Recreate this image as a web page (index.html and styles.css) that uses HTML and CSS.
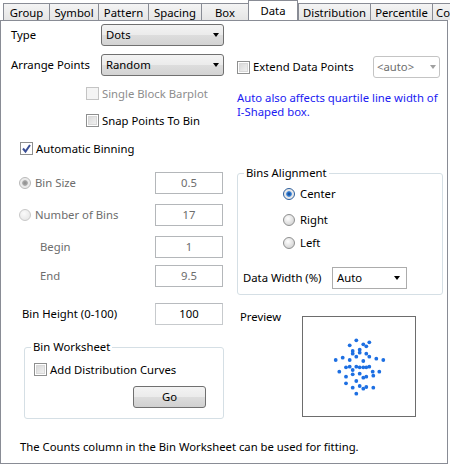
FILE: index.html
```html
<!DOCTYPE html>
<html>
<head>
<meta charset="utf-8">
<link rel="stylesheet" href="styles.css">
</head>
<body>
<div class="tabs">
  <div class="tab">Group</div>
  <div class="tab">Symbol</div>
  <div class="tab">Pattern</div>
  <div class="tab">Spacing</div>
  <div class="tab">Box</div>
  <div class="tab active">Data</div>
  <div class="tab">Distribution</div>
  <div class="tab">Percentile</div>
  <div class="tab last">Colormap</div>
</div>
<div class="panel">
  <div class="top">
    <div class="col-left">
      <div class="field row-type"><span class="lbl">Type</span><div class="combo"><span class="combo-text">Dots</span><i class="arrow"></i></div></div>
      <div class="field row-arrange"><span class="lbl">Arrange Points</span><div class="combo"><span class="combo-text">Random</span><i class="arrow"></i></div></div>
      <div class="check disabled cb-single"><span class="box"></span><span>Single Block Barplot</span></div>
      <div class="check cb-snap"><span class="box"></span><span>Snap Points To Bin</span></div>
    </div>
    <div class="col-right">
      <div class="extend-row">
        <div class="check"><span class="box"></span><span>Extend Data Points</span></div>
        <div class="combo combo-disabled"><span class="combo-text">&lt;auto&gt;</span><i class="arrow"></i></div>
      </div>
      <p class="note">Auto also affects quartile line width of<br>I-Shaped box.</p>
    </div>
  </div>
  <div class="check auto-bin"><span class="box checked"><svg width="11" height="11" viewBox="0 0 11 11"><path d="M2 5.5 L4.5 8.5 L9 2" fill="none" stroke="#3b4f96" stroke-width="2"/></svg></span><span>Automatic Binning</span></div>
  <div class="middle">
    <div class="col-left">
      <div class="brow r-size"><div class="lead"><span class="radio dis-on"></span><span class="dim">Bin Size</span></div><div class="tbox dis">0.5</div></div>
      <div class="brow r-num"><div class="lead"><span class="radio dis-off"></span><span class="dim">Number of Bins</span></div><div class="tbox dis">17</div></div>
      <div class="brow r-begin"><div class="lead indent"><span class="dim">Begin</span></div><div class="tbox dis">1</div></div>
      <div class="brow r-end"><div class="lead indent"><span class="dim">End</span></div><div class="tbox dis">9.5</div></div>
      <div class="brow r-height"><div class="lead indent2"><span>Bin Height (0-100)</span></div><div class="tbox">100</div></div>
      <div class="group ws">
        <span class="legend">Bin Worksheet</span>
        <div class="check cb-dist"><span class="box"></span><span>Add Distribution Curves</span></div>
        <div class="btn">Go</div>
      </div>
    </div>
    <div class="col-right">
      <div class="group align">
        <span class="legend">Bins Alignment</span>
        <div class="ropt r1"><span class="radio on"></span><span>Center</span></div>
        <div class="ropt r2"><span class="radio"></span><span>Right</span></div>
        <div class="ropt r3"><span class="radio"></span><span>Left</span></div>
        <div class="dw-row"><span class="dw-lbl">Data Width (%)</span><div class="combo combo-white"><span class="combo-text">Auto</span><i class="arrow"></i></div></div>
      </div>
      <div class="preview-row">
        <span class="preview-lbl">Preview</span>
        <div class="preview">
          <svg width="112" height="99" viewBox="0 0 112 99">
            <g fill="#1d6fe2">
              <circle cx="53.3" cy="23.3" r="1.9"/><circle cx="46.7" cy="28.3" r="1.9"/><circle cx="60.3" cy="27.3" r="1.9"/>
              <circle cx="66.3" cy="25.3" r="1.9"/><circle cx="63.3" cy="29.3" r="1.9"/><circle cx="49.7" cy="34" r="1.9"/>
              <circle cx="56.7" cy="32.7" r="1.9"/><circle cx="49.7" cy="36.7" r="1.9"/><circle cx="56.7" cy="35.7" r="1.9"/>
              <circle cx="63.3" cy="36.7" r="1.9"/><circle cx="53.3" cy="39.7" r="1.9"/><circle cx="66.3" cy="39.7" r="1.9"/>
              <circle cx="39.7" cy="40.7" r="1.9"/><circle cx="32.7" cy="43" r="1.9"/><circle cx="46.7" cy="43" r="1.9"/>
              <circle cx="60.3" cy="44" r="1.9"/><circle cx="73.3" cy="41.7" r="1.9"/><circle cx="80.3" cy="43" r="1.9"/>
              <circle cx="43" cy="50.3" r="1.9"/><circle cx="46.7" cy="49.7" r="1.9"/><circle cx="53.3" cy="49.7" r="1.9"/>
              <circle cx="56.7" cy="50.3" r="1.9"/><circle cx="60.3" cy="50.3" r="1.9"/><circle cx="63.3" cy="50.3" r="1.9"/>
              <circle cx="66.3" cy="49.7" r="1.9"/><circle cx="36.3" cy="54.7" r="1.9"/><circle cx="49.7" cy="53" r="1.9"/>
              <circle cx="43" cy="59.7" r="1.9"/><circle cx="49.7" cy="57.3" r="1.9"/><circle cx="56.7" cy="56.7" r="1.9"/>
              <circle cx="63.3" cy="59.7" r="1.9"/><circle cx="60.3" cy="60.7" r="1.9"/><circle cx="69.7" cy="54.7" r="1.9"/>
              <circle cx="76.3" cy="54.7" r="1.9"/><circle cx="70.3" cy="58.7" r="1.9"/><circle cx="53.3" cy="64" r="1.9"/>
              <circle cx="43" cy="66.3" r="1.9"/><circle cx="56.7" cy="69" r="1.9"/><circle cx="49.7" cy="70.7" r="1.9"/>
              <circle cx="63.3" cy="70" r="1.9"/><circle cx="60.3" cy="71.7" r="1.9"/><circle cx="70.3" cy="70.7" r="1.9"/>
              <circle cx="53.3" cy="76.7" r="1.9"/>
            </g>
          </svg>
        </div>
      </div>
    </div>
  </div>
  <p class="footer">The Counts column in the Bin Worksheet can be used for fitting.</p>
</div>
</body>
</html>
```
FILE: styles.css
```css
* { box-sizing: border-box; }
body {
  margin: 0;
  width: 450px;
  height: 464px;
  overflow: hidden;
  background: #fff;
  color: #000;
  font: 11.3px/16px "Noto Sans", "Open Sans", sans-serif;
}
.tabs {
  display: grid;
  grid-template-columns: 46px 49px 50px 53px 47px 50px 72px 62px 60px;
  margin-left: 3px;
  width: 447px;
  height: 20px;
  align-items: end;
  overflow: hidden;
}
.tab {
  height: 18px;
  border: 1px solid #898c95;
  border-bottom: none;
  border-right: none;
  background: linear-gradient(#f4f4f4, #e4e4e4);
  text-align: center;
  line-height: 17px;
  white-space: nowrap;
  overflow: hidden;
}
.tab.last { text-align: left; padding-left: 3px; }
.tab.active {
  align-self: start;
  height: 21px;
  background: #fff;
  border-right: 1px solid #898c95;
  position: relative;
  z-index: 1;
  line-height: 19px;
}
.panel {
  position: relative;
  width: 448px;
  height: 444px;
  border: 1px solid #898c95;
}
.top { display: flex; }
.col-left { width: 229px; flex: none; }
.col-right { flex: 1; }
.field { display: flex; align-items: center; height: 22px; padding-left: 10px; }
.lbl { width: 90px; }
.row-type { margin-top: 3px; }
.row-arrange { margin-top: 8px; }
.combo {
  display: flex;
  align-items: center;
  width: 123px;
  height: 22px;
  border: 1px solid #707070;
  border-radius: 3px;
  background: linear-gradient(#f3f3f3 0%, #ebebeb 50%, #dddddd 50%, #d3d3d3 100%);
  padding-left: 4px;
}
.combo-text { flex: 1; }
.arrow {
  width: 0; height: 0;
  border-left: 3.5px solid transparent;
  border-right: 3.5px solid transparent;
  border-top: 4px solid #000;
  margin-right: 4px;
}
.combo-disabled {
  width: 67px;
  margin-left: auto;
  background: #fff;
  border-color: #c4c4c4;
  color: #6d6d6d;
  padding-left: 3px;
}
.combo-disabled .arrow { border-top-color: #a0a0a0; margin-right: 3px; }
.combo-white {
  width: 75px;
  background: #fff;
  border-color: #acacac;
  border-radius: 0;
}
.combo-white .arrow { margin-right: 6px; }
.check { display: flex; align-items: center; height: 13px; white-space: nowrap; }
.check .box {
  width: 13px; height: 13px;
  flex: none;
  margin-right: 3px;
  border: 1px solid #8e8f8f;
  background: linear-gradient(135deg, #d4d4d4, #f6f6f6);
  box-shadow: inset 0 0 0 1px #fff, inset 0 0 0 2px #d8d8d8;
  display: flex; align-items: center; justify-content: center;
}
.check .box.checked { background: #fff; box-shadow: none; }
.check.disabled { color: #8d8d8d; }
.check.disabled .box { border-color: #c4c4c4; background: #f4f4f4; box-shadow: none; }
.cb-single { margin-top: 11px; padding-left: 85px; }
.cb-snap { margin-top: 14px; padding-left: 85px; }
.extend-row { display: flex; align-items: center; height: 22px; margin-top: 35px; padding: 0 7px; }
.note { margin: 13px 0 0 7px; line-height: 14px; color: #1a1af2; white-space: nowrap; }
.auto-bin { margin-top: 15px; padding-left: 19px; }
.middle { display: flex; }
.brow { display: flex; align-items: center; height: 22px; }
.lead { width: 154px; display: flex; align-items: center; padding-left: 18px; }
.lead.indent { padding-left: 39px; }
.lead.indent2 { padding-left: 21px; }
.dim { color: #6d6d6d; }
.radio {
  width: 12px; height: 12px;
  border-radius: 50%;
  flex: none;
  margin-right: 4px;
  border: 1px solid #8e8f8f;
  background: radial-gradient(circle at 40% 35%, #ffffff 0, #e6e6e6 45%, #c9c9c9 100%);
}
.radio.on {
  border-color: #2c5d9a;
  background: radial-gradient(circle at 50% 50%, #0d3f85 0, #3b86dc 2.4px, #e4e4e4 3.2px, #f8f8f8 100%);
}
.radio.dis-on {
  border-color: #b8b8b8;
  background: radial-gradient(circle at 50% 50%, #8c8c8c 0, #a8a8a8 2.4px, #e8e8e8 3.2px, #f4f4f4 100%);
}
.radio.dis-off { border-color: #c8c8c8; background: radial-gradient(circle at 40% 35%, #fafafa, #e2e2e2); }
.tbox {
  width: 68px; height: 22px;
  border: 1px solid #c7cacd;
  border-top-color: #b8bbbf;
  text-align: center;
  line-height: 20px;
}
.tbox.dis { color: #6d6d6d; border-color: #b4b7ba; }
.r-size { margin-top: 17px; }
.r-num { margin-top: 10px; }
.r-begin { margin-top: 10px; }
.r-end { margin-top: 7px; }
.r-height { margin-top: 16px; }
.group {
  position: relative;
  border: 1px solid #d5dfe5;
  border-radius: 3px;
}
.legend {
  position: absolute;
  top: -9px;
  left: 6px;
  padding: 0 2px;
  background: #fff;
  line-height: 16px;
}
.ws { margin: 22px 0 0 23px; width: 200px; height: 72px; }
.cb-dist { margin-top: 15px; padding-left: 9px; }
.btn {
  margin: 10px 0 0 108px;
  width: 73px; height: 22px;
  border: 1px solid #707070;
  border-radius: 3px;
  background: linear-gradient(#f3f3f3 0%, #ebebeb 50%, #dddddd 50%, #d0d0d0 100%);
  text-align: center;
  line-height: 19px;
}
.align { margin: 18px 0 0 7px; width: 206px; height: 122px; }
.ropt { display: flex; align-items: center; height: 16px; padding-left: 45px; }
.ropt .radio { margin-right: 5px; }
.r1 { margin-top: 12px; }
.r2 { margin-top: 10px; }
.r3 { margin-top: 7px; }
.dw-row { display: flex; align-items: center; height: 22px; margin-top: 16px; padding-left: 5px; }
.dw-lbl { width: 89px; }
.preview-row { display: flex; align-items: flex-start; padding-left: 10px; }
.preview-lbl { width: 62px; margin-top: 14px; }
.preview { margin-top: 21px; width: 114px; height: 101px; border: 1px solid #6d6d6d; }
.preview svg { display: block; }
.footer { margin: 20px 0 0; padding-left: 19px; }
```
